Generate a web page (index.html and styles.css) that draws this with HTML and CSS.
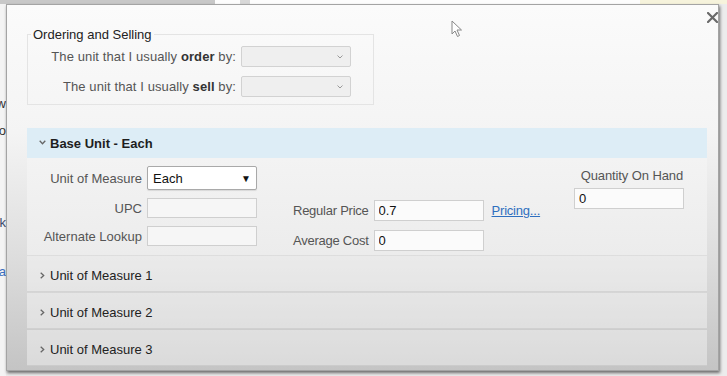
FILE: index.html
```html
<!DOCTYPE html>
<html>
<head>
    <title>Item Units</title>
    <link rel="stylesheet" href="styles.css">
</head>
<body>
    <div class="page">
        <div class="page-top">
            <span class="top-box gray"></span>
            <span class="top-box white small"></span>
            <span class="top-box gray tiny"></span>
            <span class="top-box white wide"></span>
            <span class="top-box cream"></span>
        </div>
        <div class="page-side">
            <p class="side-word w1">New</p>
            <p class="side-word w2">Info</p>
            <p class="side-word w3">Back</p>
            <p class="side-word w4 link">Data</p>
        </div>
    </div>

    <div class="dialog">
        <button class="close" type="button">
            <svg width="11" height="11" viewBox="0 0 11 11"><path d="M1 1 L10 10 M10 1 L1 10" stroke="#6a6a6a" stroke-width="2.2" stroke-linecap="round"/></svg>
        </button>

        <fieldset class="ordering">
            <legend>Ordering and Selling</legend>
            <div class="unit-row">
                <label>The unit that I usually <b>order</b> by:</label>
                <div class="combo"><svg width="6" height="4" viewBox="0 0 6 4"><path d="M0.5 0.5 L3 3 L5.5 0.5" fill="none" stroke="#999" stroke-width="1"/></svg></div>
            </div>
            <div class="unit-row">
                <label>The unit that I usually <b>sell</b> by:</label>
                <div class="combo"><svg width="6" height="4" viewBox="0 0 6 4"><path d="M0.5 0.5 L3 3 L5.5 0.5" fill="none" stroke="#999" stroke-width="1"/></svg></div>
            </div>
        </fieldset>

        <div class="section open">
            <div class="section-head">
                <svg class="chev" width="7" height="5" viewBox="0 0 7 5"><path d="M0.7 0.7 L3.5 3.7 L6.3 0.7" fill="none" stroke="#666" stroke-width="1.3"/></svg>
                <span class="head-title">Base Unit - Each</span>
            </div>
            <div class="section-body">
                <div class="col-ids">
                    <label>Unit of Measure</label>
                    <div class="uom-select">Each<span class="down">&#9660;</span></div>
                    <label>UPC</label>
                    <input type="text" class="field">
                    <label>Alternate Lookup</label>
                    <input type="text" class="field">
                </div>
                <div class="col-price">
                    <label>Regular Price</label>
                    <input type="text" class="field light" value="0.7">
                    <a href="#" class="pricing">Pricing...</a>
                    <label>Average Cost</label>
                    <input type="text" class="field light" value="0">
                    <span></span>
                </div>
                <div class="col-qty">
                    <label>Quantity On Hand</label>
                    <input type="text" class="field light" value="0">
                </div>
            </div>
        </div>

        <div class="section">
            <div class="section-head">
                <svg class="chev" width="5" height="7" viewBox="0 0 5 7"><path d="M0.7 0.7 L3.7 3.5 L0.7 6.3" fill="none" stroke="#666" stroke-width="1.3"/></svg>
                <span class="head-title plain">Unit of Measure 1</span>
            </div>
        </div>
        <div class="section">
            <div class="section-head">
                <svg class="chev" width="5" height="7" viewBox="0 0 5 7"><path d="M0.7 0.7 L3.7 3.5 L0.7 6.3" fill="none" stroke="#666" stroke-width="1.3"/></svg>
                <span class="head-title plain">Unit of Measure 2</span>
            </div>
        </div>
        <div class="section">
            <div class="section-head">
                <svg class="chev" width="5" height="7" viewBox="0 0 5 7"><path d="M0.7 0.7 L3.7 3.5 L0.7 6.3" fill="none" stroke="#666" stroke-width="1.3"/></svg>
                <span class="head-title plain">Unit of Measure 3</span>
            </div>
        </div>
    </div>

    <svg class="cursor" width="12" height="18" viewBox="0 0 12 18">
        <path d="M1 1 L1 14 L4 11 L6.5 16.5 L8.5 15.5 L6 10 L10.5 10 Z" fill="#fff" stroke="#888" stroke-width="1"/>
    </svg>
</body>
</html>
```

FILE: styles.css
```css
body {
    font-family: "Liberation Sans", Arial, sans-serif;
    font-size: 13px;
    background-color: #ececec;
    margin: 0;
    width: 727px;
    height: 376px;
    overflow: hidden;
}

/* page behind the dialog */
.page-top {
    display: flex;
    height: 4px;
}

.top-box {
    display: block;
    height: 4px;
}

.top-box.gray {
    width: 215px;
    background-color: #c8c8c8;
}

.top-box.white {
    background-color: #fdfdfd;
}

.top-box.small {
    width: 25px;
}

.top-box.tiny {
    width: 10px;
    background-color: #d8d8d8;
}

.top-box.wide {
    width: 390px;
}

.top-box.cream {
    flex: 1;
    background-color: #f6f3dc;
}

.page-side {
    width: 6px;
    overflow: hidden;
    direction: rtl;
    background-color: #f4f4f4;
    height: 372px;
}

.side-word {
    margin: 0;
    white-space: nowrap;
    font-size: 13px;
    color: #333;
    line-height: 15px;
}

.side-word.w1 { padding-top: 92px; }
.side-word.w2 { padding-top: 12px; }
.side-word.w3 { padding-top: 77px; }
.side-word.w4 { padding-top: 34px; }

.side-word.w3 {
    color: #3b4a6a;
}

.side-word.link {
    color: #3a6fc0;
}

/* dialog */
.dialog {
    position: absolute;
    left: 6px;
    top: 4px;
    width: 713px;
    height: 367px;
    box-sizing: border-box;
    border: 1px solid #a4a4a4;
    box-shadow: 1px 2px 3px rgba(0, 0, 0, 0.55);
    background: linear-gradient(#fbfbfb 0%, #f4f4f4 35%, #dedede 68%, #c4c4c4 100%);
    padding: 22px 11px 0 20px;
}

.close {
    position: absolute;
    right: 0;
    top: 7px;
    border: none;
    background: none;
    padding: 0;
    width: 11px;
    height: 11px;
    cursor: pointer;
}

.close svg {
    display: block;
}

.ordering {
    width: 347px;
    box-sizing: border-box;
    margin: 0 0 23px 0;
    padding: 4px 0 7px 0;
    border: 1px solid #e4e4e4;
}

.ordering legend {
    margin-left: 3px;
    padding: 0 2px;
    line-height: 15px;
    color: #222;
}

.unit-row {
    display: flex;
    align-items: center;
    gap: 5px;
    height: 21px;
    margin-bottom: 9px;
}

.unit-row:last-child {
    margin-bottom: 0;
}

.unit-row label {
    width: 208px;
    text-align: right;
    color: #555;
    letter-spacing: 0.1px;
}

.unit-row b {
    color: #333;
}

.combo {
    width: 110px;
    height: 21px;
    box-sizing: border-box;
    border: 1px solid #d2d2d2;
    background-color: #efefef;
    border-radius: 2px;
    display: flex;
    align-items: center;
    justify-content: flex-end;
    padding-right: 7px;
}

/* accordion */
.section-head {
    display: flex;
    align-items: center;
    height: 36px;
    box-sizing: border-box;
    background-color: rgba(255, 255, 255, 0.38);
    border-bottom: 1px solid rgba(0, 0, 0, 0.07);
    margin-bottom: 1px;
    padding: 4px 0 0 8px;
}

.section.open .section-head {
    height: 30px;
    background-color: #ddedf6;
    border-bottom: none;
    margin-bottom: 0;
    padding-top: 1px;
}

.chev {
    display: block;
    width: 15px;
}

.section.open .chev {
    margin-top: -3px;
}

.head-title {
    font-weight: bold;
    color: #1e1e1e;
}

.head-title.plain {
    font-weight: normal;
    color: #222;
}

.section-body {
    display: flex;
    height: 97px;
    box-sizing: border-box;
    padding-top: 8px;
    background: linear-gradient(#f3f3f3, #ececec);
    margin-bottom: 1px;
}

.section-body label {
    color: #555;
}

.col-ids {
    display: grid;
    grid-template-columns: 115px 110px;
    grid-template-rows: 24px 20px 20px;
    column-gap: 5px;
    row-gap: 8px;
    align-items: center;
}

.col-ids label {
    text-align: right;
}

.uom-select {
    height: 24px;
    box-sizing: border-box;
    border: 1px solid #a9a9a9;
    border-radius: 2px;
    background-color: #fff;
    display: flex;
    align-items: center;
    justify-content: space-between;
    padding: 0 5px 0 5px;
    color: #111;
    box-shadow: 0 1px 1px rgba(0, 0, 0, 0.1);
}

.down {
    font-size: 10px;
    color: #111;
}

.field {
    width: 110px;
    height: 20px;
    box-sizing: border-box;
    border: 1px solid #cfcfcf;
    background-color: #f6f6f6;
    font-family: inherit;
    font-size: 13px;
    color: #111;
    padding: 0 4px;
    margin: 0;
}

.field.light {
    height: 21px;
    background-color: #fbfbfb;
}

.col-price {
    display: grid;
    grid-template-columns: auto 110px auto;
    grid-template-rows: 21px 21px;
    column-gap: 5px;
    row-gap: 9px;
    align-items: center;
    margin-left: 36px;
    padding-top: 34px;
}

.col-price label {
    letter-spacing: -0.25px;
}

.pricing {
    color: #2f6fbf;
    margin-left: 3px;
    letter-spacing: -0.2px;
}

.col-qty {
    display: flex;
    flex-direction: column;
    width: 110px;
    margin-left: 34px;
    padding-top: 2px;
}

.col-qty label {
    text-align: right;
    padding-right: 1px;
    line-height: 15px;
    margin-bottom: 5px;
    letter-spacing: -0.1px;
}

.cursor {
    position: absolute;
    left: 451px;
    top: 20px;
}
```
